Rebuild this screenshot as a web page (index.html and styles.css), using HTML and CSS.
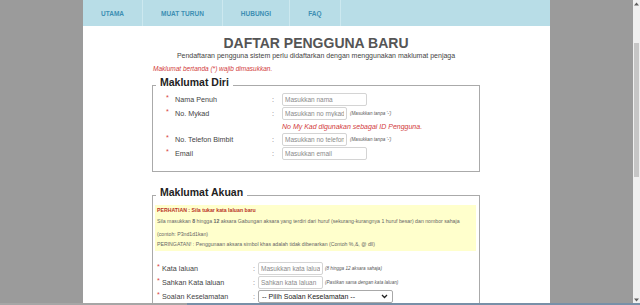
FILE: index.html
```html
<!DOCTYPE html>
<html lang="ms">
<head>
    <meta charset="UTF-8">
    <meta name="viewport" content="width=device-width, initial-scale=1.0">
    <title>Daftar Pengguna Baru</title>
    <link rel="stylesheet" href="styles.css">
</head>
<body>
    <div class="screen">
        <div class="viewport">
            <div class="page">
                <nav class="menu">
                    <a href="#">UTAMA</a>
                    <a href="#">MUAT TURUN</a>
                    <a href="#">HUBUNGI</a>
                    <a href="#">FAQ</a>
                </nav>
                <div class="content">
                    <h1 class="title">DAFTAR PENGGUNA BARU</h1>
                    <p class="lead">Pendaftaran pengguna sistem perlu didaftarkan dengan menggunakan maklumat penjaga</p>
                    <p class="note">Maklumat bertanda (*) wajib dimasukkan.</p>

                    <section class="box">
                        <h2 class="box-title">Maklumat Diri</h2>
                        <div class="rows rows-diri">
                            <div class="row">
                                <span class="star">*</span><label class="label">Nama Penuh</label><span class="colon">:</span>
                                <input class="field field-long" placeholder="Masukkan nama">
                            </div>
                            <div class="row">
                                <span class="star">*</span><label class="label">No. Mykad</label><span class="colon">:</span>
                                <input class="field" placeholder="Masukkan no mykad">
                                <span class="hint">(Masukkan tanpa '-')</span>
                            </div>
                            <div class="info">No My Kad digunakan sebagai ID Pengguna.</div>
                            <div class="row">
                                <span class="star">*</span><label class="label">No. Telefon Bimbit</label><span class="colon">:</span>
                                <input class="field" placeholder="Masukkan no telefon">
                                <span class="hint">(Masukkan tanpa '-')</span>
                            </div>
                            <div class="row">
                                <span class="star">*</span><label class="label">Email</label><span class="colon">:</span>
                                <input class="field field-long" placeholder="Masukkan email">
                            </div>
                        </div>
                    </section>

                    <section class="box box-akuan">
                        <h2 class="box-title">Maklumat Akuan</h2>
                        <div class="notice">
                            <p class="notice-head">PERHATIAN : Sila tukar kata laluan baru</p>
                            <p class="notice-body">Sila masukkan <b>8</b> hingga <b>12</b> aksara Gabungan aksara yang terdiri dari huruf (sekurang-kurangnya 1 huruf besar) dan nombor sahaja<br>(contoh: P3nd1d1kan)</p>
                            <p class="notice-warn">PERINGATAN! : Penggunaan aksara simbol khas adalah tidak dibenarkan (Contoh %,&amp;, @ dll)</p>
                        </div>
                        <div class="rows rows-akuan">
                            <div class="row">
                                <span class="star">*</span><label class="label">Kata laluan</label><span class="colon">:</span>
                                <input class="field" type="password" placeholder="Masukkan kata laluan">
                                <span class="hint">(8 hingga 12 aksara sahaja)</span>
                            </div>
                            <div class="row">
                                <span class="star">*</span><label class="label">Sahkan Kata laluan</label><span class="colon">:</span>
                                <input class="field" type="password" placeholder="Sahkan kata laluan">
                                <span class="hint">(Pastikan sama dengan kata laluan)</span>
                            </div>
                            <div class="row">
                                <span class="star">*</span><label class="label">Soalan Keselamatan</label><span class="colon">:</span>
                                <div class="select">
                                    <span>-- Pilih Soalan Keselamatan --</span>
                                    <svg width="7" height="5" viewBox="0 0 7 5"><path d="M1 1l2.5 2.5L6 1" fill="none" stroke="#222" stroke-width="1.3"/></svg>
                                </div>
                            </div>
                        </div>
                    </section>
                </div>
            </div>
        </div>
        <div class="scrollbar">
            <svg class="arrow" width="5" height="4" viewBox="0 0 5 4"><path d="M0 3.5L2.5 0.5 5 3.5z" fill="#606060"/></svg>
            <div class="thumb"></div>
            <svg class="arrow arrow-down" width="5" height="4" viewBox="0 0 5 4"><path d="M0 0.5L2.5 3.5 5 0.5z" fill="#606060"/></svg>
        </div>
    </div>
    <div class="edge"><span class="edge-left"></span><span class="edge-right"></span></div>
</body>
</html>
```

FILE: styles.css
```css
html, body {
    margin: 0; padding: 0;
    width: 100%;
    height: 100%;
    overflow: hidden;
    font-family: "Liberation Sans", Arial, sans-serif;
}

.screen {
    display: flex;
    height: 303px;
}

.viewport {
    flex: 1;
    background: #9b9b9b;
    overflow: hidden;
}

.page {
    width: 467px;
    margin: 0 auto;
    min-height: 100%;
    background: #fff;
}

/* top menu */
.menu {
    display: flex;
    height: 26px;
    background: #b8dde7;
}

.menu a {
    display: flex;
    align-items: center;
    padding: 0 18px;
    font-size: 6.5px;
    font-weight: bold;
    color: #3d8fb3;
    text-decoration: none;
    border-right: 1px solid #cce8ef;
}

.content {
    padding: 9px 70px 0 69px;
}

.title {
    margin: 0;
    text-align: center;
    font-size: 14px;
    line-height: 16px;
    color: #555;
}

.lead {
    margin: 0;
    text-align: center;
    font-size: 7px;
    line-height: 9px;
    color: #444;
}

.note {
    margin: 4px 0 12px 1px;
    font-size: 6.5px;
    line-height: 9px;
    font-style: italic;
    color: #d23b3b;
}

/* fieldset-like boxes */
.box {
    border: 1px solid #aaa;
}

.box-akuan {
    margin-top: 23px;
}

.box-title {
    display: table;
    margin: -10px 0 0 3px;
    padding: 0 4px;
    background: #fff;
    font-size: 10.5px;
    line-height: 12px;
    color: #222;
}

.rows-diri {
    padding: 5px 0 10px 13px;
}

.rows-akuan {
    padding: 11px 0 0 4px;
}

.row {
    display: flex;
    align-items: center;
    height: 13px;
    margin-bottom: 1px;
    font-size: 7.2px;
    color: #444;
}

.star {
    width: 9px;
    color: #d9433f;
    align-self: flex-start;
    line-height: 10px;
}

.label {
    width: 97px;
}

.colon {
    width: 10px;
    color: #777;
}

.rows-akuan .star { width: 5px; }
.rows-akuan .label { width: 91px; }
.rows-akuan .colon { width: 5px; }

.field {
    box-sizing: border-box;
    width: 65px;
    height: 13px;
    margin: 0;
    padding: 0 2px;
    border: 1px solid #d4d4d4;
    border-radius: 2px;
    font-family: inherit;
    font-size: 6.5px;
    color: #333;
}

.field::placeholder {
    color: #8a8a8a;
}

.field-long {
    width: 85px;
}

.hint {
    margin-left: 3px;
    font-size: 4.6px;
    font-style: italic;
    color: #555;
}

.rows-akuan .hint {
    margin-left: 2px;
}

.info {
    height: 11px;
    line-height: 11px;
    margin-bottom: 1px;
    padding-left: 116px;
    font-size: 7px;
    font-style: italic;
    color: #d23b3b;
}

/* yellow notice */
.notice {
    margin: 7px 3px 0 2px;
    padding: 1px 2px 3px;
    background: #ffffcc;
    font-size: 5.2px;
    color: #666;
}

.notice p {
    margin: 0;
}

.notice-head {
    line-height: 9px;
    font-weight: bold;
    color: #b8341f;
}

.notice-body {
    line-height: 13px;
    white-space: nowrap;
}

.notice-warn {
    line-height: 7px;
}

.select {
    box-sizing: border-box;
    display: flex;
    align-items: center;
    justify-content: space-between;
    width: 135px;
    height: 13px;
    padding: 0 4px 0 3px;
    border: 1px solid #a9a9a9;
    border-radius: 2px;
    font-size: 7px;
    color: #222;
}

/* fake scrollbar */
.scrollbar {
    width: 7px;
    background: #f0f0f0;
    display: flex;
    flex-direction: column;
    align-items: center;
}

.arrow {
    margin-top: 2px;
}

.thumb {
    width: 5px;
    height: 134px;
    margin-top: 37px;
    background: #c6c6c6;
}

.arrow-down {
    margin-top: auto;
    margin-bottom: 1px;
}

.edge {
    display: flex;
    height: 2px;
}

.edge-left {
    width: 187px;
    background: #a6a6a6;
}

.edge-right {
    flex: 1;
    background: #7890a8;
}
```
